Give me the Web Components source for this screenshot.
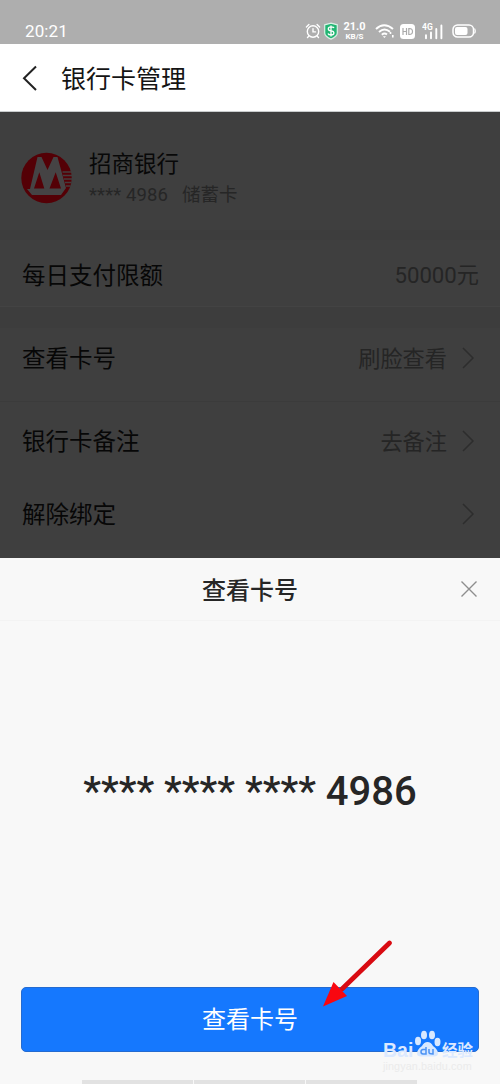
<!DOCTYPE html>
<html lang="zh-CN">
<head>
<meta charset="utf-8">
<title>银行卡管理</title>
<style>
html,body{margin:0;height:1084px;overflow:hidden}
body{width:500px;background:#f8f8f8;font-family:Roboto,"Noto Sans CJK SC",sans-serif}
</style>
</head>
<body>
<phone-screen>
  <status-bar></status-bar>
  <nav-header>银行卡管理</nav-header>
  <dim-page>
    <bank-card name="招商银行"></bank-card>
    <list-row label="每日支付限额" style="--h:67px;--line:#434343;--c:36px" plain><span>50000元</span></list-row>
    <list-gap></list-gap>
    <list-row label="查看卡号" style="--h:74px;--line:#3b3b3b;--c:31px">刷脸查看</list-row>
    <list-row label="银行卡备注" style="--h:76px;--c:40px">去备注</list-row>
    <list-row label="解除绑定" style="--h:80px;--c:37px"></list-row>
  </dim-page>
  <bottom-sheet title="查看卡号">
    <span slot="number">**** **** **** 4986</span>
    <primary-button slot="action">查看卡号</primary-button>
  </bottom-sheet>
  <tutorial-arrow></tutorial-arrow>
  <water-mark></water-mark>
</phone-screen>
<script>
const define = (tag, html, setup) => customElements.define(tag, class extends HTMLElement {
  constructor() {
    super();
    const t = document.createElement('template');
    t.innerHTML = html;
    this.attachShadow({mode: 'open'}).append(t.content.cloneNode(true));
    if (setup) setup(this, this.shadowRoot);
  }
});

define('phone-screen', `<style>:host{display:flex;flex-direction:column;position:relative;width:500px;height:1084px;overflow:hidden}</style><slot></slot>`);

define('status-bar', `<style>
:host{display:flex;box-sizing:border-box;height:44px;padding:17px 24px 0 25px;justify-content:space-between;align-items:flex-start;background:#aeaeae;color:#fff}
time{font-size:17px;line-height:28px;letter-spacing:.1px}
div{display:flex;align-items:center;height:28px}
svg{display:block;flex:none}
.rate{width:25px;margin:0 8px 0 3px;display:flex;flex-direction:column;align-items:center;font-weight:700;font-size:11px;line-height:11px;height:20px}
.rate small{font-size:8px;line-height:9px}
</style>
<time>20:21</time>
<div>
<svg width="16" height="18" viewBox="0 0 16 18" fill="none" stroke="#fff" stroke-width="1.4" stroke-linecap="round"><circle cx="8" cy="9.5" r="5.7"/><path d="M8 6.6v3.3h2.5M1.4 5l2.5-2.4M14.6 5l-2.5-2.4M3.8 14l-1.3 1.6M12.2 14l1.3 1.6"/></svg>
<svg style="margin-left:2px" width="16" height="18" viewBox="0 0 16 18"><path d="M8 1.2l6.3 1.6v8.1q0 3.3-6.3 6.2Q1.7 14.200 1.700 10.900V2.800Z" fill="#22b573" stroke="#d9efe4" stroke-width="1.2"/><path d="M11 6Q10.500 4.900 8 4.900 5.300 4.900 5.300 6.900 5.300 8.500 8 8.800 10.900 9.100 10.900 10.900 10.900 12.900 8 12.900 5.400 12.900 5 11.500M8 3.500v10.900" fill="none" stroke="#fff" stroke-width="1.3"/></svg>
<span class="rate"><span>21.0</span><small>KB/S</small></span>
<svg width="20" height="16" viewBox="0 0 20 16" fill="none" stroke="#fff" stroke-width="1.9"><path d="M1 6Q9 -1.400 18 6M4 9Q9.300 4 15 8.700M6.800 11.700Q9.500 9.400 12 11.500"/><path d="M7.800 13.200h3.200L9.400 15Z" fill="#fff" stroke="none"/><path d="M15.500 9v2M17.800 12v2.400" stroke-width="1.6"/></svg>
<svg style="margin-left:5px" width="15" height="15" viewBox="0 0 15 15"><rect width="15" height="15" rx="3.500" fill="#fff"/><path d="M3 4v7M6.500 4v7M3 7.500h3.500M8.800 4.500v6q3.700.3 3.700-3t-3.700-3Z" fill="none" stroke="#aaa" stroke-width="1.200"/></svg>
<svg style="margin-left:7px" width="22" height="17" viewBox="0 0 22 17"><text x="0" y="7" font-family="Roboto" font-size="8.500" font-weight="700" fill="#fff">4G</text><path d="M4 12.300v3M9 9.500v5.800M14.300 6v9.300M19.400 2.500v12.800" stroke="#fff" stroke-width="1.900" stroke-linecap="round"/></svg>
<svg style="margin-left:8px" width="24" height="14" viewBox="0 0 24 14"><rect x="1" y="1" width="20.500" height="12" rx="4.500" fill="none" stroke="#fff" stroke-width="1.500"/><rect x="3" y="3" width="12.500" height="8" rx="2" fill="#fff"/><path d="M22.500 4.500q1.500 2.500 0 5" stroke="#fff" stroke-width="1.200" fill="none"/></svg>
</div>`);

define('nav-header', `<style>
:host{display:flex;align-items:center;box-sizing:border-box;height:68px;padding-left:22px;background:#fff;color:#141414;font-size:25px;line-height:34px;border-bottom:1px solid #c9cccd}
svg{margin-right:22px}
span{padding-top:4px}
</style><svg width="17" height="26" viewBox="0 0 17 26" fill="none" stroke="#222" stroke-width="2"><path d="M14 1.500 2 13.200 14 25"/></svg><span><slot></slot></span>`);

define('dim-page', `<style>:host{display:flex;flex-direction:column;height:446px;background:#3f3f3f;overflow:hidden}</style><slot></slot>`);

define('bank-card', `<style>
:host{display:flex;box-sizing:border-box;height:128px;padding:35px 0 0 20px;border-bottom:10px solid #3d3d3d;font-size:22.5px;color:#080808}
svg{margin:5px 16px 0 0;flex:none}
.n{line-height:34px}.s{display:flex;font-size:18.500px;line-height:28px;color:#262626}
.s b{font-weight:400;letter-spacing:.1px;margin-right:14px;white-space:pre}
</style>
<svg width="53" height="52" viewBox="0 0 53 52"><circle cx="26.500" cy="26" r="25.200" fill="#540006"/><path fill-rule="evenodd" d="M17.500 5h4L27.500 18 33.500 5h4L46 36 41 43H12L7 37h3ZM19.300 20.300 14 36.500h10.300ZM35.700 20.300 29.500 36.500H41Z" fill="#454344"/><path d="M42.500 20h9.500M43 23.500h9M44 27h8M45 30.500h6.500M46 34h4.500" stroke="#443c3d" stroke-width="1.300"/></svg>
<div><div class="n"></div><div class="s"><b>**** 4986</b><span>储蓄卡</span></div></div>`,
(el, r) => r.querySelector('.n').textContent = el.getAttribute('name'));

define('list-gap', `<style>:host{display:block;height:21px;background:#3d3d3d}</style>`);

define('list-row', `<style>
:host{display:flex;box-sizing:border-box;height:var(--h);padding:calc(var(--c) - 17px) 21px 0 22px;border-bottom:1px solid var(--line,transparent);line-height:34px;font-size:23.500px;color:#070707}
.v{margin-left:auto;font-size:22.200px;color:#252525}
svg{margin:4px 3px 0 14px}
:host([plain]) .v{margin-top:-1px}
:host([plain]) svg{display:none}
</style><span class="l"></span><span class="v"><slot></slot></span><svg width="15" height="24" viewBox="0 0 15 24" fill="none" stroke="#2d2d2d" stroke-width="1.500"><path d="M2 2 12 12 2 22"/></svg>`,
(el, r) => r.querySelector('.l').textContent = el.getAttribute('label'));

define('bottom-sheet', `<style>
:host{display:flex;flex-direction:column;height:526px;background:#f8f8f8;color:#262626}
header{display:grid;grid-template-columns:1fr auto 1fr;align-items:center;height:62px;border-bottom:1px solid #f3f3f3;font-size:24px;font-weight:500}
header .t{padding-bottom:2px}
header svg{justify-self:end;margin-right:22px}
.num{height:366px;box-sizing:border-box;padding-top:146px;text-align:center;font-size:40px;line-height:50px;font-weight:500;white-space:nowrap}
.act{padding:0 21px;height:93px}
footer{display:flex;gap:1px;width:335px;height:4px;margin-left:82px}
i{flex:1;background:#e2e2e2}
</style>
<header><i style="visibility:hidden"></i><span class="t"></span><svg width="18" height="18" viewBox="0 0 18 18" stroke="#8e8e8e" stroke-width="1.400"><path d="M1.500 1.500 16.500 16.500M16.500 1.500 1.500 16.500"/></svg></header>
<div class="num"><slot name="number"></slot></div>
<div class="act"><slot name="action"></slot></div>
<footer><i></i><i></i><i></i></footer>`,
(el, r) => r.querySelector('.t').textContent = el.getAttribute('title'));

define('primary-button', `<style>:host{display:flex;align-items:center;justify-content:center;box-sizing:border-box;height:65px;background:#1578fe;border:1px solid #246bd0;border-radius:5px;color:#fff;font-size:24px;line-height:34px}</style><slot></slot>`);

define('tutorial-arrow', `<style>:host{position:absolute;left:320px;top:936px;width:76px;height:74px}svg{display:block}</style>
<svg width="76" height="74" viewBox="0 0 76 74"><path d="M69.500 7 22 53" stroke="#d90b12" stroke-width="4.800" stroke-linecap="round"/><path d="M3 70.500 13.500 46 27 60Z" fill="#f90710"/></svg>`);

define('water-mark', `<style>
:host{position:absolute;left:383px;top:1029px;width:95px;height:46px;color:#dce9ff}
.r{display:flex;height:29px;align-items:flex-end;font:700 19.500px/20px "Liberation Sans",sans-serif}
.r span{width:31px;margin-bottom:-2px}
.r svg{flex:none;width:27px;height:27px;margin:0 1px 1px 0}
.r b{font:700 15.500px/20px "Noto Sans CJK SC",sans-serif;margin-bottom:-1px}
small{display:block;font:10.800px/14px "Liberation Sans",sans-serif;color:#ebebeb;white-space:nowrap;margin-top:1px;letter-spacing:.1px}
</style>
<div class="r"><span>Bai</span><svg viewBox="0 0 27 27"><g fill="#d8e8ff"><ellipse cx="4" cy="11" rx="3" ry="4.200"/><ellipse cx="10" cy="5" rx="3" ry="4.300"/><ellipse cx="18" cy="5" rx="3" ry="4.300"/><ellipse cx="23.500" cy="12" rx="3" ry="4.200"/><path d="M13.500 12Q17 12 19 16q5 3.500 5 7.500 0 3-4 3H7q-4 0-4-3 0-4 5-7.500 2-4 5.500-4Z"/></g><path d="M12 17v7H9q-2-.2-2-2.300t2-2.300h3M15 19v3.500q0 1.500 4 1.500v-5" fill="none" stroke="#4c93f4" stroke-width="1.500"/></svg><b>经验</b></div>
<small>jingyan.baidu.com</small>`);
</script>
</body>
</html>
